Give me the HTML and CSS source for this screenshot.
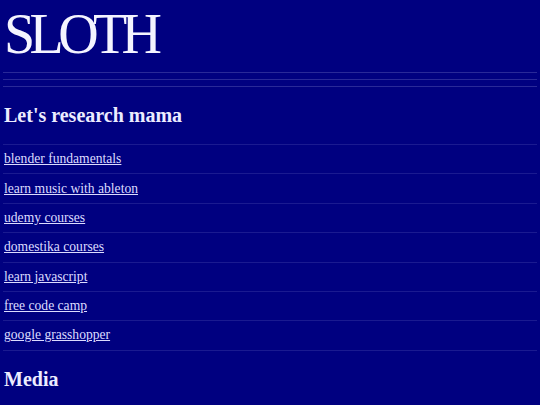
FILE: index.html
```html
<!DOCTYPE html>
<html>
<head>
<meta charset="utf-8">
<link rel="stylesheet" href="styles.css">
</head>
<body>
<main class="page">
  <header class="masthead">
    <h1 class="logo">SLOTH</h1>
  </header>
  <div class="rules">
    <div class="rule"></div>
    <div class="rule"></div>
    <div class="rule"></div>
  </div>
  <section class="section">
    <h2 class="section-title">Let's research mama</h2>
    <ul class="links">
      <li class="link-row"><a href="#">blender fundamentals</a></li>
      <li class="link-row"><a href="#">learn music with ableton</a></li>
      <li class="link-row"><a href="#">udemy courses</a></li>
      <li class="link-row"><a href="#">domestika courses</a></li>
      <li class="link-row"><a href="#">learn javascript</a></li>
      <li class="link-row"><a href="#">free code camp</a></li>
      <li class="link-row"><a href="#">google grasshopper</a></li>
    </ul>
  </section>
  <section class="section">
    <h2 class="section-title">Media</h2>
  </section>
</main>
</body>
</html>
```

FILE: styles.css
```css
html, body {
  margin: 0;
  padding: 0;
  background: #000080;
}

body {
  font-family: "Liberation Serif", "Times New Roman", serif;
  color: #eeeeff;
}

.page {
  padding: 0 3px;
}

.masthead {
  padding-top: 3px;
}

.logo {
  margin: 0;
  font-size: 56px;
  font-weight: normal;
  letter-spacing: -5.6px;
  line-height: 62px;
  color: #f4f4ff;
  padding-left: 1px;
}

.rules {
  display: flex;
  flex-direction: column;
  gap: 6px;
  margin-top: 7px;
}

.rule {
  height: 1px;
  background: rgba(160, 160, 220, 0.26);
}

.section-title {
  margin: 17px 0 17px;
  font-size: 20px;
  font-weight: bold;
  padding-left: 1px;
  color: #ececff;
}

.links {
  list-style: none;
  margin: 0;
  padding: 0;
  border-top: 1px solid rgba(120, 120, 200, 0.22);
}

.link-row {
  padding: 6.2px 0 6.2px 1px;
  font-size: 13.6px;
  border-bottom: 1px solid rgba(120, 120, 200, 0.22);
}

.link-row a {
  color: #dcdcff;
  text-decoration: underline;
}
```
